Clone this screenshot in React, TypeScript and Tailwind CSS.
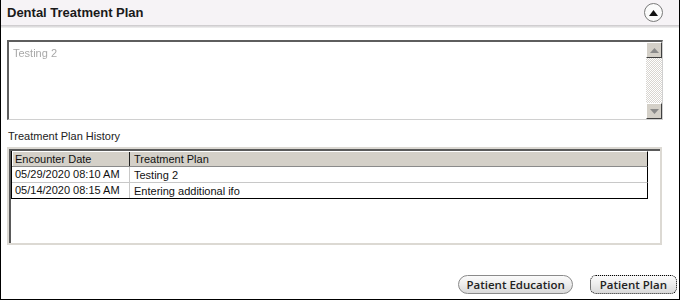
import React from "react";

const ui = { fontFamily: '"Liberation Sans", Arial, sans-serif' };

function ScrollBtn({ dir }: { dir: "up" | "down" }) {
  return (
    <div className="w-[16px] h-[16px] bg-[#d4d0c8] border-t border-l border-t-white border-l-white border-b border-r border-b-[#404040] border-r-[#404040] flex items-center justify-center">
      <svg width="9" height="5" viewBox="0 0 9 5">
        {dir === "up" ? (
          <polygon points="4.5,0 9,5 0,5" fill="#8a8a8a" />
        ) : (
          <polygon points="0,0 9,0 4.5,5" fill="#8a8a8a" />
        )}
      </svg>
    </div>
  );
}

export default function App() {
  const rows = [
    ["05/29/2020 08:10 AM", "Testing 2"],
    ["05/14/2020 08:15 AM", "Entering additional ifo"],
  ];
  return (
    <div
      className="w-[680px] h-[300px] bg-white border-l border-r border-b border-black flex flex-col overflow-hidden"
      style={ui}
    >
      {/* Header */}
      <div className="h-[25px] shrink-0 bg-[#f6f3f6] flex items-center justify-between pl-[6px] pr-[16px]">
        <span className="text-[13px] font-bold text-[#1a1a1a]">Dental Treatment Plan</span>
        <div className="w-[19px] h-[19px] rounded-full border border-[#7a7a7a] bg-[#fbfbfb] flex items-center justify-center">
          <svg width="9" height="6" viewBox="0 0 9 6">
            <polygon points="4.5,0 9,6 0,6" fill="#111" />
          </svg>
        </div>
      </div>
      <div className="h-[3px] shrink-0 bg-gradient-to-b from-[#c9c6c9] to-[#f3f3f3]" />

      {/* Text area */}
      <div className="mt-[12px] ml-[6px] w-[656px] h-[80px] shrink-0 flex border-t-2 border-l-2 border-t-[#5e5e5e] border-l-[#5e5e5e] border-b border-r border-b-[#d0d0d0] border-r-[#d0d0d0]">
        <div className="flex-1 pl-[4px] pt-[3px] text-[11px] text-[#a8a8a8] blur-[0.7px]">
          Testing 2
        </div>
        <div className="w-[16px] flex flex-col">
          <ScrollBtn dir="up" />
          <div className="flex-1 bg-[repeating-conic-gradient(#d8d5d0_0_25%,#ffffff_0_50%)] bg-[length:2px_2px]" />
          <ScrollBtn dir="down" />
        </div>
      </div>

      {/* Label */}
      <div className="mt-[10px] ml-[7px] text-[11px] leading-[13px] text-[#222]">
        Treatment Plan History
      </div>

      {/* Grid */}
      <div className="mt-[4px] ml-[6px] w-[655px] h-[98px] shrink-0 border-2 border-[#dcd9d3] flex">
        <div className="flex-1 border-t-2 border-l-2 border-t-[#5a5a5a] border-l-[#5a5a5a] bg-white">
          <div className="w-[637px] border-l border-black text-[11px] leading-[14px] text-[#111] whitespace-nowrap">
            <div className="flex h-[16px] bg-[#d4d0c8] border-t border-t-white border-b border-b-[#8a8a8a] border-r border-r-black">
              <div className="w-[118px] pl-[2px] border-r border-[#202020] border-l border-l-white">
                Encounter Date
              </div>
              <div className="flex-1 pl-[4px]">Treatment Plan</div>
            </div>
            {rows.map((r, i) => (
              <div
                key={i}
                className={
                  "flex h-[16px] items-center border-r border-black " +
                  (i === rows.length - 1 ? "border-b border-b-black" : "border-b border-b-[#c8c8c8]")
                }
              >
                <div className="w-[118px] h-full pl-[3px] border-r border-[#c8c8c8]">{r[0]}</div>
                <div className="flex-1 pl-[4px]">{r[1]}</div>
              </div>
            ))}
          </div>
        </div>
      </div>

      {/* Buttons */}
      <div className="flex-1 flex items-end justify-end gap-[17px] pr-[2px] pb-[5px]">
        <button
          className="h-[19px] px-[7px] rounded-full border border-[#8a8a8a] bg-gradient-to-b from-[#fbfbfb] via-[#ececec] to-[#d9d9d9] text-[11.5px] leading-[16px] font-semibold text-[#222]"
          style={{ fontFamily: '"Open Sans", sans-serif' }}
        >
          Patient Education
        </button>
        <button
          className="h-[19px] px-[9px] rounded-[6px] border border-dotted border-black bg-gradient-to-b from-[#fbfbfb] via-[#ececec] to-[#d9d9d9] text-[11.5px] leading-[16px] font-semibold text-[#222]"
          style={{ fontFamily: '"Open Sans", sans-serif' }}
        >
          Patient Plan
        </button>
      </div>
    </div>
  );
}
